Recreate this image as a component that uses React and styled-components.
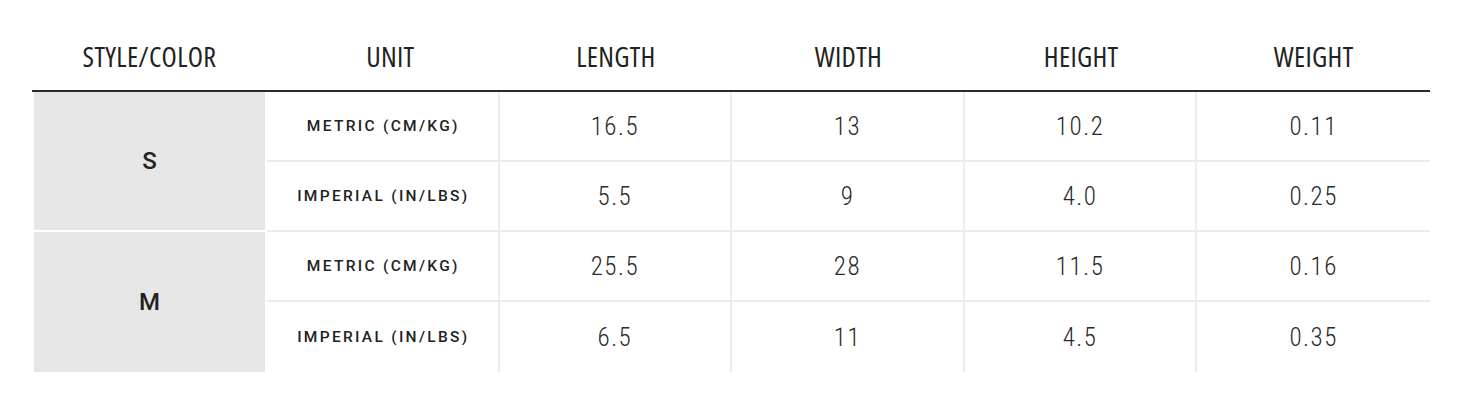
import React from "react";
import styled, { createGlobalStyle } from "styled-components";

const GlobalStyle = createGlobalStyle`
  html, body {
    margin: 0;
    background: #fff;
  }
  body {
    font-family: "Roboto", "Liberation Sans", sans-serif;
    color: #222;
  }
`;

const headers = ["STYLE/COLOR", "UNIT", "LENGTH", "WIDTH", "HEIGHT", "WEIGHT"];

const sizes = [
  {
    name: "S",
    rows: [
      { unit: "METRIC (CM/KG)", values: ["16.5", "13", "10.2", "0.11"] },
      { unit: "IMPERIAL (IN/LBS)", values: ["5.5", "9", "4.0", "0.25"] },
    ],
  },
  {
    name: "M",
    rows: [
      { unit: "METRIC (CM/KG)", values: ["25.5", "28", "11.5", "0.16"] },
      { unit: "IMPERIAL (IN/LBS)", values: ["6.5", "11", "4.5", "0.35"] },
    ],
  },
];

export default function App() {
  const lastSize = sizes.length - 1;
  return (
    <>
      <GlobalStyle />
      <Page>
        <Table>
          <HeaderRow>
            {headers.map((h, i) => (
              <HeaderCell key={h} $shift={i === 1}>
                {h}
              </HeaderCell>
            ))}
          </HeaderRow>
          <Body>
            {sizes.map((size, si) =>
              size.rows.map((row, ri) => {
                const isLast = si === lastSize && ri === size.rows.length - 1;
                return (
                  <React.Fragment key={size.name + row.unit}>
                    {ri === 0 && (
                      <SizeCell $span={size.rows.length} $last={si === lastSize}>
                        {size.name}
                      </SizeCell>
                    )}
                    <UnitCell $last={isLast}>{row.unit}</UnitCell>
                    {row.values.map((v, vi) => (
                      <ValueCell
                        key={vi}
                        $last={isLast}
                        $end={vi === row.values.length - 1}
                      >
                        {v}
                      </ValueCell>
                    ))}
                  </React.Fragment>
                );
              })
            )}
          </Body>
        </Table>
      </Page>
    </>
  );
}

const Page = styled.div`
  padding: 22px 0 0 32px;
`;

const Table = styled.div`
  width: 1398px;
`;

const columns = "235px repeat(5, 1fr)";

const HeaderRow = styled.div`
  display: grid;
  grid-template-columns: ${columns};
  height: 68px;
  border-bottom: 2px solid #2b2b2b;
`;

const HeaderCell = styled.div`
  display: flex;
  align-items: center;
  justify-content: center;
  padding-left: ${(p) => (p.$shift ? "14px" : "0")};
  font-family: "Open Sans", "Roboto Condensed", sans-serif;
  font-stretch: 75%;
  font-size: 28px;
  font-weight: 400;
  letter-spacing: 0.3px;
  color: #222;
`;

const Body = styled.div`
  display: grid;
  grid-template-columns: ${columns};
  grid-auto-rows: 70px;
`;

const SizeCell = styled.div`
  grid-row: span ${(p) => p.$span};
  display: flex;
  align-items: center;
  justify-content: center;
  background: #e6e6e6;
  background-clip: padding-box;
  border: 2px solid #fff;
  border-top: 0;
  border-bottom-width: ${(p) => (p.$last ? "0" : "2px")};
  font-family: "Roboto", sans-serif;
  font-size: 24px;
  font-weight: 500;
  color: #222;
`;

const UnitCell = styled.div`
  display: flex;
  align-items: center;
  justify-content: center;
  border-right: 2px solid #ebebeb;
  border-bottom: ${(p) => (p.$last ? "0" : "2px solid #ebebeb")};
  font-family: "Roboto", sans-serif;
  font-size: 15.5px;
  font-weight: 500;
  letter-spacing: 2.3px;
  padding-left: 2px;
  color: #222;
`;

const ValueCell = styled.div`
  display: flex;
  align-items: center;
  justify-content: center;
  border-right: ${(p) => (p.$end ? "0" : "2px solid #ebebeb")};
  border-bottom: ${(p) => (p.$last ? "0" : "2px solid #ebebeb")};
  font-family: "Roboto Condensed", "Roboto", sans-serif;
  font-size: 25px;
  font-weight: 300;
  letter-spacing: 1.5px;
  color: #2a2a2a;
`;
